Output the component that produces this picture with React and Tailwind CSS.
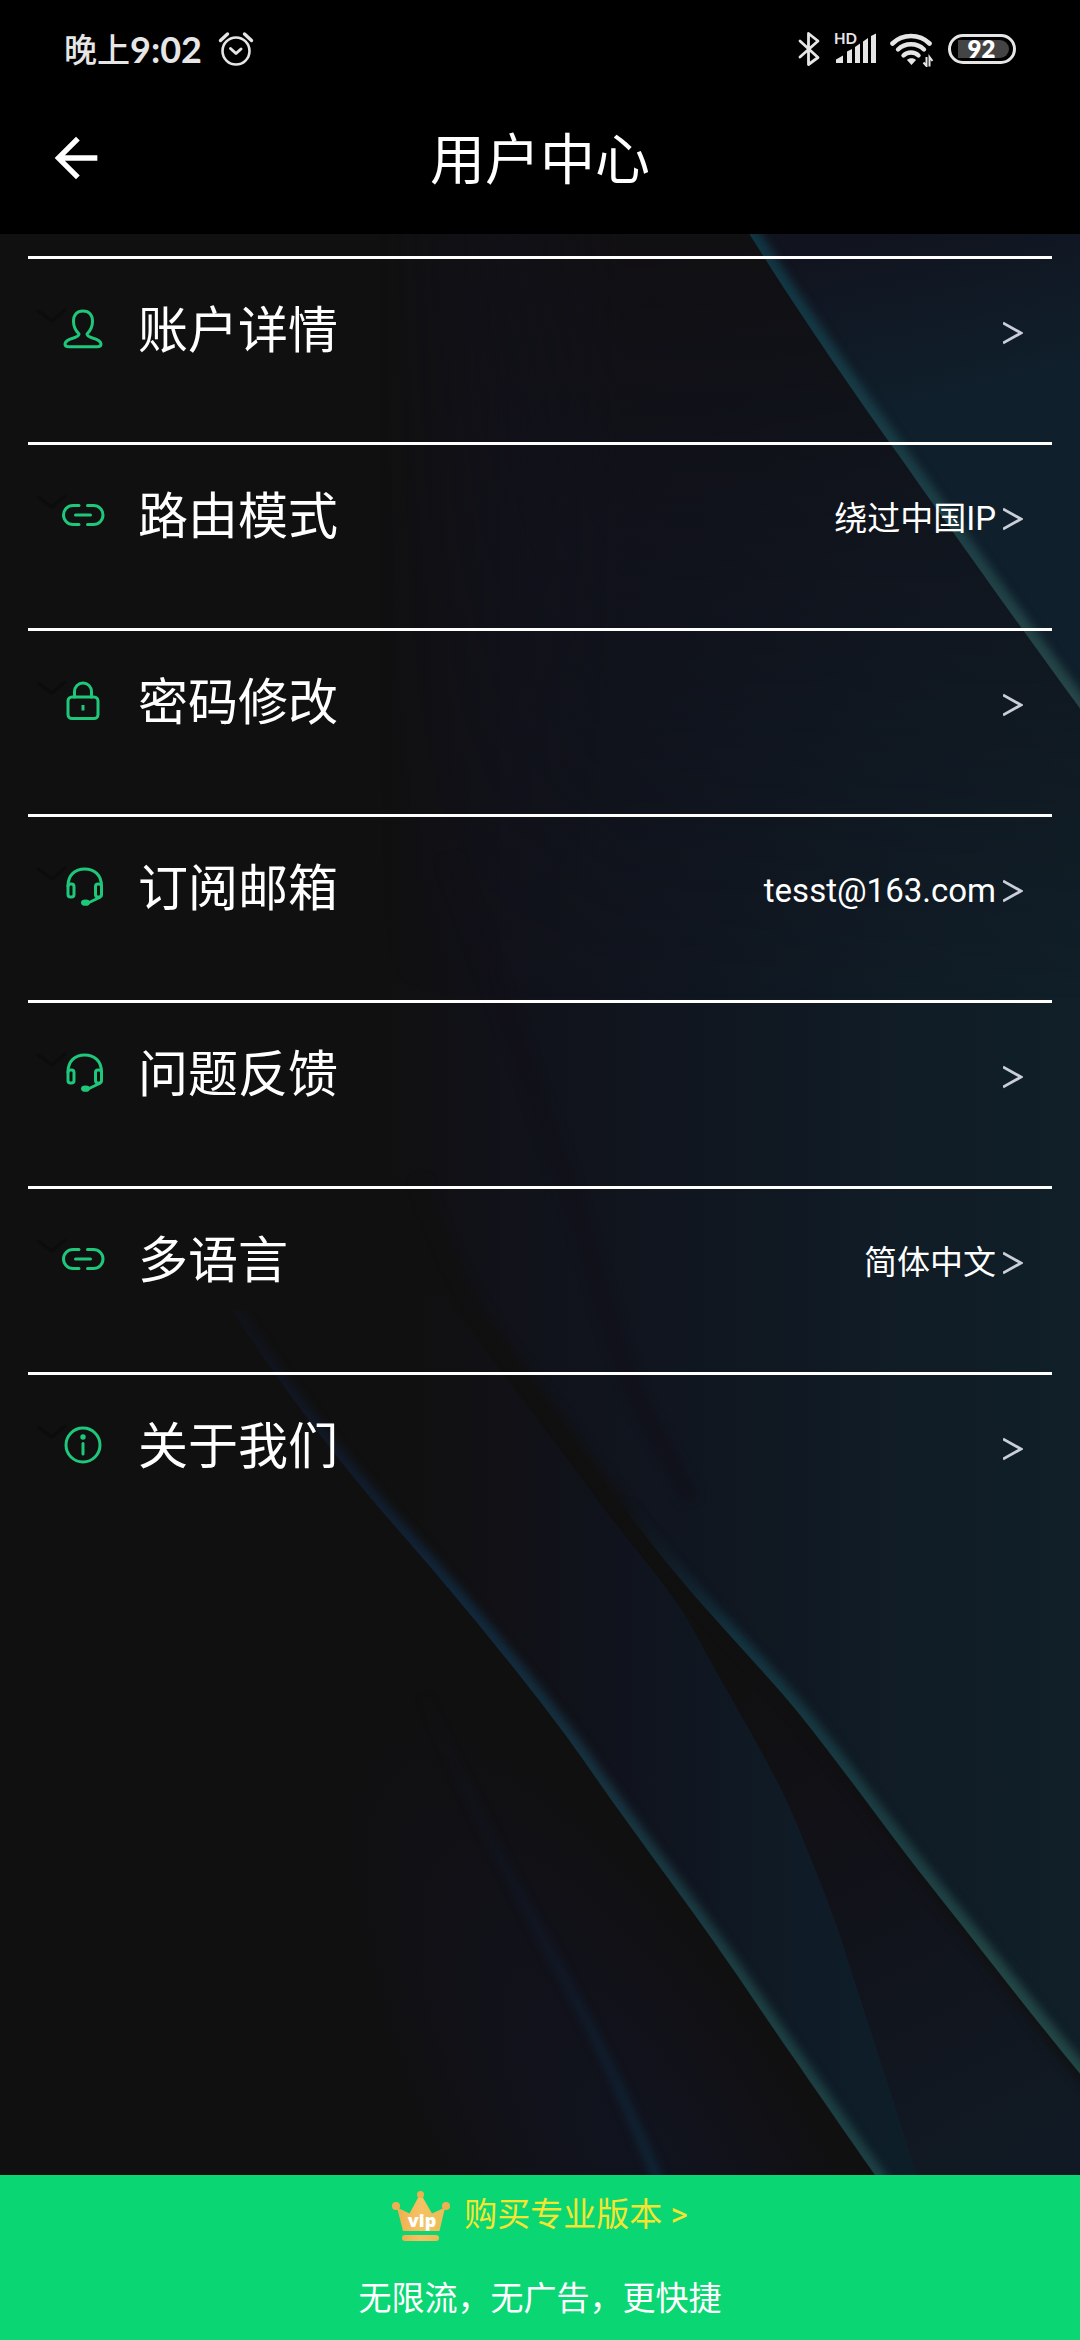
import React from "react";

const ICON_GREEN = "#1fc77b";

/** Wallpaper behind the settings list: dark folds with lit edges. */
function Wallpaper() {
	const edgeTop = "M742 222 C790 300 850 387 890 443 S1000 600 1090 722";
	const edgeMain =
		"M420 1180 C445 1250 470 1300 503 1343 S600 1475 641 1530 S735 1640 779 1690 S880 1822 930 1885 S1040 2026 1100 2098";
	const edgeLeft =
		"M232 1310 C280 1385 340 1464 400 1532 S545 1704 589 1768 S700 1920 737 1975 S840 2125 882 2185";

	return (
		<svg
			className="absolute inset-0 h-full w-full"
			viewBox="0 234 1080 1941"
			preserveAspectRatio="none"
			aria-hidden="true"
		>
			<defs>
				<linearGradient id="base" gradientUnits="userSpaceOnUse" x1="380" y1="0" x2="1080" y2="0">
					<stop offset="0" stopColor="#101010" />
					<stop offset="0.18" stopColor="#11121a" />
					<stop offset="0.45" stopColor="#101620" />
					<stop offset="0.75" stopColor="#101c26" />
					<stop offset="1" stopColor="#101f28" />
				</linearGradient>
				<linearGradient id="upper" gradientUnits="userSpaceOnUse" x1="0" y1="234" x2="0" y2="1000">
					<stop offset="0" stopColor="#110f11" stopOpacity="0.9" />
					<stop offset="0.4" stopColor="#111018" stopOpacity="0.55" />
					<stop offset="1" stopColor="#101018" stopOpacity="0" />
				</linearGradient>
				<linearGradient id="upperFade" gradientUnits="userSpaceOnUse" x1="380" y1="0" x2="620" y2="0">
					<stop offset="0" stopColor="#000000" />
					<stop offset="1" stopColor="#ffffff" />
				</linearGradient>
				<mask id="upperMask">
					<rect x="0" y="234" width="1080" height="766" fill="url(#upperFade)" />
				</mask>
				<linearGradient id="corner" gradientUnits="userSpaceOnUse" x1="900" y1="234" x2="940" y2="400">
					<stop offset="0" stopColor="#11141f" />
					<stop offset="1" stopColor="#0f1f2b" />
				</linearGradient>
				<linearGradient id="under" gradientUnits="userSpaceOnUse" x1="720" y1="1650" x2="1000" y2="2175">
					<stop offset="0" stopColor="#101010" />
					<stop offset="0.4" stopColor="#111118" />
					<stop offset="1" stopColor="#111a24" />
				</linearGradient>
				<linearGradient id="panel" gradientUnits="userSpaceOnUse" x1="400" y1="0" x2="900" y2="0">
					<stop offset="0" stopColor="#101010" />
					<stop offset="0.2" stopColor="#111116" />
					<stop offset="0.45" stopColor="#10131d" />
					<stop offset="0.8" stopColor="#0f1b26" />
					<stop offset="1" stopColor="#0e1e29" />
				</linearGradient>
				<radialGradient
					id="lowerLeft"
					gradientUnits="userSpaceOnUse"
					cx="0"
					cy="0"
					r="1"
					gradientTransform="translate(650 2190) rotate(-30) scale(190 560)"
				>
					<stop offset="0" stopColor="#10141f" />
					<stop offset="0.5" stopColor="#111119" />
					<stop offset="1" stopColor="#101010" />
				</radialGradient>
				<linearGradient id="lit" gradientUnits="userSpaceOnUse" x1="0" y1="1330" x2="0" y2="2000">
					<stop offset="0" stopColor="#131a34" stopOpacity="0.3" />
					<stop offset="0.4" stopColor="#11283c" />
					<stop offset="1" stopColor="#1d4043" />
				</linearGradient>
				<linearGradient id="litMain" gradientUnits="userSpaceOnUse" x1="0" y1="1500" x2="0" y2="1960">
					<stop offset="0" stopColor="#11253a" stopOpacity="0" />
					<stop offset="0.3" stopColor="#133340" />
					<stop offset="1" stopColor="#224646" />
				</linearGradient>
				<linearGradient id="litTop" gradientUnits="userSpaceOnUse" x1="0" y1="234" x2="0" y2="700">
					<stop offset="0" stopColor="#103543" />
					<stop offset="1" stopColor="#264648" />
				</linearGradient>
				<linearGradient id="litFaint" gradientUnits="userSpaceOnUse" x1="0" y1="1680" x2="0" y2="2175">
					<stop offset="0" stopColor="#13152a" stopOpacity="0" />
					<stop offset="1" stopColor="#102637" />
				</linearGradient>
				<clipPath id="clipTop">
					<path d={`${edgeTop} L1090 222 Z`} />
				</clipPath>
				<clipPath id="clipMain">
					<path d={`${edgeMain} L1100 1180 Z`} />
				</clipPath>
				<clipPath id="clipLeft">
					<path d={`${edgeLeft} L1000 2185 L1000 1310 Z`} />
				</clipPath>
				<filter id="soft" x="-20%" y="-20%" width="140%" height="140%" colorInterpolationFilters="sRGB">
					<feGaussianBlur stdDeviation="4" />
				</filter>
			</defs>

			<rect x="0" y="234" width="1080" height="1941" fill="url(#base)" />
			<rect x="0" y="234" width="1080" height="766" fill="url(#upper)" mask="url(#upperMask)" />

			{/* faint crease running down the middle */}
			<path
				d="M450 860 C500 1000 560 1150 600 1290 S660 1430 690 1500"
				fill="none"
				stroke="#110f18"
				strokeOpacity="0.6"
				strokeWidth="18"
				filter="url(#soft)"
			/>

			{/* top right corner */}
			<path d={`${edgeTop} L1090 222 Z`} fill="url(#corner)" />
			<g clipPath="url(#clipTop)">
				<path d={edgeTop} fill="none" stroke="url(#litTop)" strokeWidth="20" filter="url(#soft)" />
			</g>

			{/* everything under the long diagonal */}
			<path d={`${edgeMain} L1100 2185 L200 2185 L200 1180 Z`} fill="url(#under)" />
			<path d={edgeMain} fill="none" stroke="#101010" strokeOpacity="0.8" strokeWidth="12" filter="url(#soft)" />
			<path
				d="M232 1310 L440 1290 C490 1360 550 1435 593 1494 S670 1585 699 1640 S775 1770 796 1822 S830 1905 840 1936 S890 2090 920 2185 L882 2185 C820 2090 700 1920 589 1768 S340 1464 232 1310 Z"
				fill="url(#panel)"
			/>
			<path d={`${edgeLeft} L0 2185 L0 1310 Z`} fill="url(#lowerLeft)" />

			<g clipPath="url(#clipMain)">
				<path d={edgeMain} fill="none" stroke="url(#litMain)" strokeWidth="20" filter="url(#soft)" />
			</g>
			<g clipPath="url(#clipLeft)">
				<path d={edgeLeft} fill="none" stroke="url(#lit)" strokeWidth="18" filter="url(#soft)" />
			</g>
			<path
				d="M424 1695 C445 1745 470 1796 493 1843 S575 1996 596 2039 S640 2135 660 2185"
				fill="none"
				stroke="url(#litFaint)"
				strokeWidth="10"
				filter="url(#soft)"
			/>
		</svg>
	);
}

/** Row icon frame; a faint dark tick sits left of every icon. */
function RowIcon({ children }) {
	return (
		<svg
			className="size-[76px] shrink-0"
			viewBox="0 0 76 76"
			fill="none"
			stroke={ICON_GREEN}
			strokeWidth="3"
			strokeLinecap="round"
			strokeLinejoin="round"
			aria-hidden="true"
		>
			<path d="M2 18 16 28 29 17" stroke="#0c0c0c" strokeWidth="3" />
			{children}
		</svg>
	);
}

function UserIcon() {
	return (
		<RowIcon>
			<path d="M43 41C39.500 37.500 37.500 33 37.500 28.500C37.500 22 41 18 47 18s9.500 4 9.500 10.500c0 4.500-2 9-5.500 12.500c0 1.500 1.500 2.700 5.500 4C62.500 46.800 65 48.500 65 51c0 2-1.500 2.800-4 2.800H33c-2.500 0-4-.8-4-2.800c0-2.500 2.500-4.200 8.500-6c4-1.300 5.500-2.500 5.500-4z" />
		</RowIcon>
	);
}

function LinkIcon() {
	return (
		<RowIcon>
			<path d="M43 26.500H37a9.500 9.500 0 0 0 0 19h6M51.500 26.500h6a9.500 9.500 0 0 1 0 19h-6M39.500 36h15" />
		</RowIcon>
	);
}

function LockIcon() {
	return (
		<RowIcon>
			<rect x="32" y="32" width="30" height="21.500" rx="4" />
			<path d="M38.500 32v-5.500a8.500 8.500 0 0 1 17 0V32" />
			<path d="M47 40v5.500" strokeLinecap="butt" />
		</RowIcon>
	);
}

function HeadsetIcon() {
	return (
		<RowIcon>
			<rect x="32" y="33" width="6" height="13" rx="2.500" />
			<rect x="59.500" y="33" width="6" height="13" rx="2.500" />
			<path d="M32 35c0-11 7-17 16.700-17S65.500 24 65.500 35M63.500 46.500 52 52" />
			<ellipse cx="49.500" cy="51.700" rx="3" ry="1.600" fill={ICON_GREEN} />
		</RowIcon>
	);
}

function InfoIcon() {
	return (
		<RowIcon>
			<circle cx="47" cy="36" r="17" />
			<circle cx="47" cy="28" r="1.200" fill={ICON_GREEN} />
			<path d="M47 34.500V45" />
		</RowIcon>
	);
}

function StatusBar() {
	return (
		<div className="flex h-[98px] items-center justify-between px-16 text-[#e6e6e6]">
			<div className="flex items-center gap-4 font-['Lato','Noto_Sans_CJK_SC',sans-serif] leading-none">
				<span className="flex items-center">
					<span className="text-[33px] font-medium">晚上</span>
					<span className="text-[36px] font-bold">9:02</span>
				</span>
				<svg className="size-9" viewBox="0 0 36 36" fill="none" stroke="currentColor" strokeLinecap="round" strokeLinejoin="round" aria-hidden="true">
					<circle cx="18" cy="20" r="13.500" strokeWidth="2.600" />
					<path d="M12.500 17.500 18 22.500l5-4.500" strokeWidth="3" />
					<path d="M2.500 9.500 9.500 3M33.500 9.500 26.500 3" strokeWidth="3.400" />
				</svg>
			</div>

			<div className="flex items-center gap-[14px]">
				<svg className="h-9 w-[22px]" viewBox="0 0 22 36" fill="none" stroke="currentColor" strokeWidth="2.800" strokeLinecap="round" strokeLinejoin="round" aria-hidden="true">
					<path d="M2 10 20 26.500 10.500 33.500V2.500L20 10 2 26" />
				</svg>
				<svg className="h-9 w-[42px] overflow-visible" viewBox="0 0 42 36" fill="currentColor" aria-hidden="true">
					<path d="M2 28.500 9 24.500V32H2zM13 20.500l5-2.500V32h-5zM21 16l5-3.500V32h-5zM29 10.500 34 7v25h-5zM37 5l5-2.500V32h-5z" />
					<text x="0" y="13" className="font-['Lato',sans-serif] text-[15px] font-bold">
						HD
					</text>
				</svg>
				<svg className="h-9 w-[44px]" viewBox="0 0 44 36" fill="none" stroke="currentColor" aria-hidden="true">
					<path d="M2.500 12.500c10-10 27-10 37 0" strokeWidth="4.600" strokeLinecap="round" />
					<path d="M8 18.500c7-7 19-7 26 0" strokeWidth="4.400" strokeLinecap="round" />
					<path d="M13.500 24.500c4-4 11-4 15 0" strokeWidth="4.400" strokeLinecap="round" />
					<path d="M17 29c2-2.500 7-2.500 9 0L21.500 34z" fill="currentColor" stroke="none" />
					<path d="M36.500 26v9l-3-3.500M39.500 35.500V26l3 4" strokeWidth="2" />
				</svg>
				<div className="flex h-[30px] w-[68px] items-center rounded-full border-3 border-current pl-[7px] pr-1">
					<div className="flex h-[18px] flex-1 items-center justify-center rounded-r-full bg-[#444444] pr-1 font-['Lato',sans-serif] text-[24px] font-extrabold leading-none text-white">
						92
					</div>
				</div>
			</div>
		</div>
	);
}

function SettingsRow({ icon: Icon, label, value }) {
	return (
		<li className="border-t-3 border-white">
			<button type="button" className="flex h-[183px] w-full items-center pb-10 pl-2 pr-[29px] text-left">
				<Icon />
				<span className="ml-[26px] text-[50px] leading-none">{label}</span>
				<span className="ml-auto flex items-center gap-[7px] pt-1">
					{value && <span className="text-[33px] leading-none">{value}</span>}
					<svg className="h-6 w-5" viewBox="0 0 20 24" fill="none" stroke="#c9ced8" strokeWidth="2.800" aria-hidden="true">
						<path d="M0 2 18 12 0 22" />
					</svg>
				</span>
			</button>
		</li>
	);
}

function CrownIcon() {
	return (
		<svg className="h-[50px] w-[58px]" viewBox="0 0 58 50" aria-hidden="true">
			<defs>
				<linearGradient id="crown" x1="0" y1="0" x2="1" y2="0">
					<stop offset="0" stopColor="#f0b04e" />
					<stop offset="0.5" stopColor="#f6c264" />
					<stop offset="1" stopColor="#e8bd57" />
				</linearGradient>
			</defs>
			<g fill="url(#crown)">
				<path d="M5 16.500 17.500 22.500 27 5h3l10 17.500L53 16.500 47.500 40H11z" />
				<rect x="10" y="44" width="37" height="6" rx="3" />
			</g>
			<g fill="#efb14f">
				<circle cx="4" cy="15" r="4" />
				<circle cx="28.500" cy="3.500" r="3.500" />
				<circle cx="54" cy="15" r="4" />
			</g>
			<text x="30" y="36" textAnchor="middle" fill="#ffffff" className="font-['Open_Sans',sans-serif] text-[18px] font-extrabold">
				vip
			</text>
		</svg>
	);
}

const rows = [
	{ icon: UserIcon, label: "账户详情" },
	{ icon: LinkIcon, label: "路由模式", value: "绕过中国IP" },
	{ icon: LockIcon, label: "密码修改" },
	{ icon: HeadsetIcon, label: "订阅邮箱", value: "tesst@163.com" },
	{ icon: HeadsetIcon, label: "问题反馈" },
	{ icon: LinkIcon, label: "多语言", value: "简体中文" },
	{ icon: InfoIcon, label: "关于我们" },
];

export default function App() {
	return (
		<div className="flex min-h-screen flex-col bg-black font-['Roboto','Noto_Sans_CJK_SC',sans-serif] text-white">
			<header className="pb-4">
				<StatusBar />
				<div className="grid h-[120px] grid-cols-[1fr_auto_1fr] items-center px-11">
					<button type="button" aria-label="返回" className="size-16">
						<svg className="size-16" viewBox="0 0 24 24" fill="currentColor" aria-hidden="true">
							<path d="M20 11H7.830l5.590-5.590L12 4l-8 8 8 8 1.410-1.410L7.830 13H20v-2z" />
						</svg>
					</button>
					<h1 className="pt-1 text-[55px] leading-none">用户中心</h1>
				</div>
			</header>

			<main className="relative flex-1 bg-[#101010]">
				<Wallpaper />
				<ul className="relative px-7 pt-[22px]">
					{rows.map((row) => (
						<SettingsRow key={row.label} {...row} />
					))}
				</ul>
			</main>

			<footer className="flex h-[165px] flex-col bg-[#0bd674] text-[33px] leading-none">
				<a href="#pro" className="flex flex-1 items-center justify-center gap-[14px] text-[#f5e52f]">
					<CrownIcon />
					<span className="pb-1">购买专业版本 &gt;</span>
				</a>
				<p className="flex flex-1 items-center justify-center">无限流，无广告，更快捷</p>
			</footer>
		</div>
	);
}
